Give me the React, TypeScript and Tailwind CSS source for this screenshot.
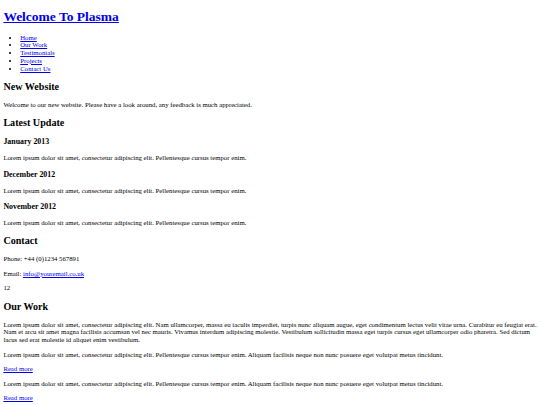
const navItems = ['Home', 'Our Work', 'Testimonials', 'Projects', 'Contact Us']

const updates = ['January 2013', 'December 2012', 'November 2012']

const shortLorem = 'Lorem ipsum dolor sit amet, consectetur adipiscing elit. Pellentesque cursus tempor enim.'
const workLorem =
  'Lorem ipsum dolor sit amet, consectetur adipiscing elit. Pellentesque cursus tempor enim. Aliquam facilisis neque non nunc posuere eget volutpat metus tincidunt.'
const longLorem =
  'Lorem ipsum dolor sit amet, consectetur adipiscing elit. Nam ullamcorper, massa eu iaculis imperdiet, turpis nunc aliquam augue, eget condimentum lectus velit vitae urna. Curabitur eu feugiat erat. Nam et arcu sit amet magna facilisis accumsan vel nec mauris. Vivamus interdum adipiscing molestie. Vestibulum sollicitudin massa eget turpis cursus eget ullamcorper odio pharetra. Sed dictum lacus sed erat molestie id aliquet enim vestibulum.'

// page is the browser default stylesheet, shown at 540/1280 scale
const p = 'my-[6.75px]'
const h2 = 'text-[10.125px] leading-[11.64px] font-bold my-[8.4px]'
const h3 = 'text-[7.9px] leading-[9.08px] font-bold my-[7.9px]'
const link = 'text-[#0000ee] underline'

export default function App() {
  return (
    <div className="min-h-[405px] bg-white px-[3.375px] pb-[4px] text-[6.75px] leading-[7.76px] text-black font-['Liberation_Serif','Times_New_Roman',serif]">
      <h1 className="text-[13.5px] leading-[15.52px] font-bold mt-[9.045px] mb-[9.045px]">
        <a href="#" className={link}>Welcome To Plasma</a>
      </h1>

      <ul className="list-disc pl-[16.875px] my-[6.75px]">
        {navItems.map((item) => (
          <li key={item}>
            <a href="#" className={link}>{item}</a>
          </li>
        ))}
      </ul>

      <h2 className={h2}>New Website</h2>
      <p className={p}>Welcome to our new website. Please have a look around, any feedback is much appreciated.</p>

      <h2 className={h2}>Latest Update</h2>
      {updates.map((u) => (
        <div key={u}>
          <h3 className={h3}>{u}</h3>
          <p className={p}>{shortLorem}</p>
        </div>
      ))}

      <h2 className={h2}>Contact</h2>
      <p className={p}>Phone: +44 (0)1234 567891</p>
      <p className={p}>
        Email: <a href="#" className={link}>info@youremail.co.uk</a>
      </p>
      <p className={p}>12</p>

      <h2 className={h2}>Our Work</h2>
      <p className={p}>{longLorem}</p>
      <p className={p}>{workLorem}</p>
      <p className={p}>
        <a href="#" className={link}>Read more</a>
      </p>
      <p className={p}>{workLorem}</p>
      <p className={p}>
        <a href="#" className={link}>Read more</a>
      </p>
    </div>
  )
}
